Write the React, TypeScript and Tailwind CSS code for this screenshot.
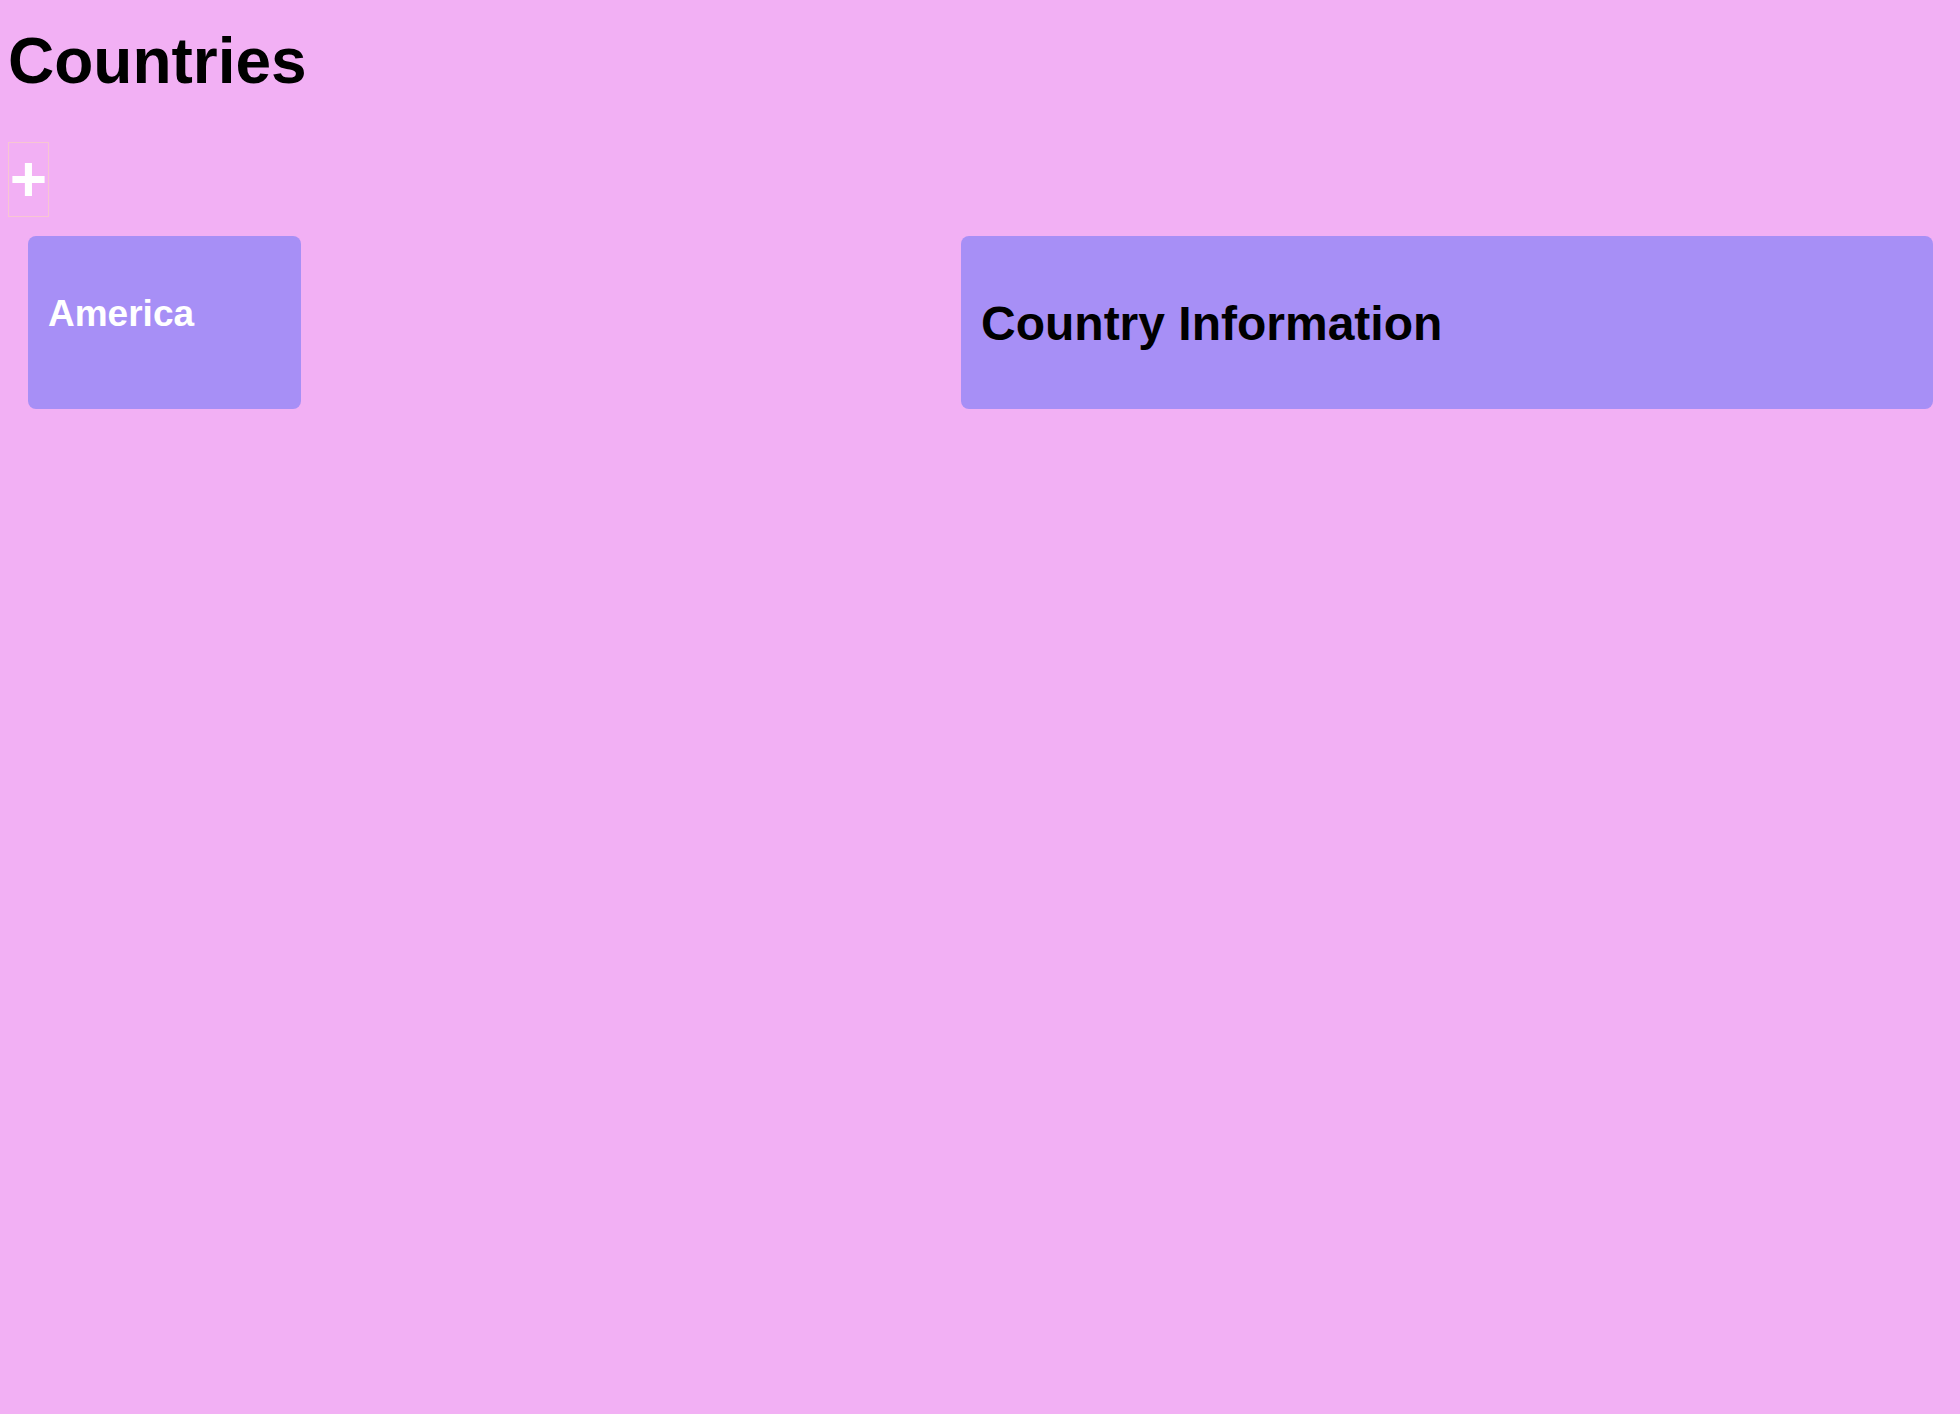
import React from "react";

export default function App() {
  return (
    <div
      className="min-h-screen w-full bg-[#f2b0f4] text-black"
      style={{ fontFamily: '"Liberation Sans", Arial, Helvetica, sans-serif' }}
    >
      <div className="px-[8px] pt-[24px]">
        <h1 className="text-[64px] leading-[74px] font-bold">Countries</h1>
        <button
          type="button"
          className="mt-[44px] flex h-[75px] w-[41px] items-center justify-center border border-[#f7c6d2] text-[64px] leading-[73px] font-bold text-white"
        >
          +
        </button>
      </div>
      <div className="mt-[19px] flex justify-between pl-[28px] pr-[27px]">
        <div className="h-[173px] w-[273px] rounded-[8px] bg-[#a78ff6] pl-[20px] pt-[57px]">
          <h2 className="text-[37px] leading-[42px] font-bold text-white">America</h2>
        </div>
        <div className="h-[173px] w-[972px] rounded-[8px] bg-[#a78ff6] pl-[20px] pt-[60px]">
          <h2 className="text-[48px] leading-[55px] font-bold text-black">Country Information</h2>
        </div>
      </div>
    </div>
  );
}
